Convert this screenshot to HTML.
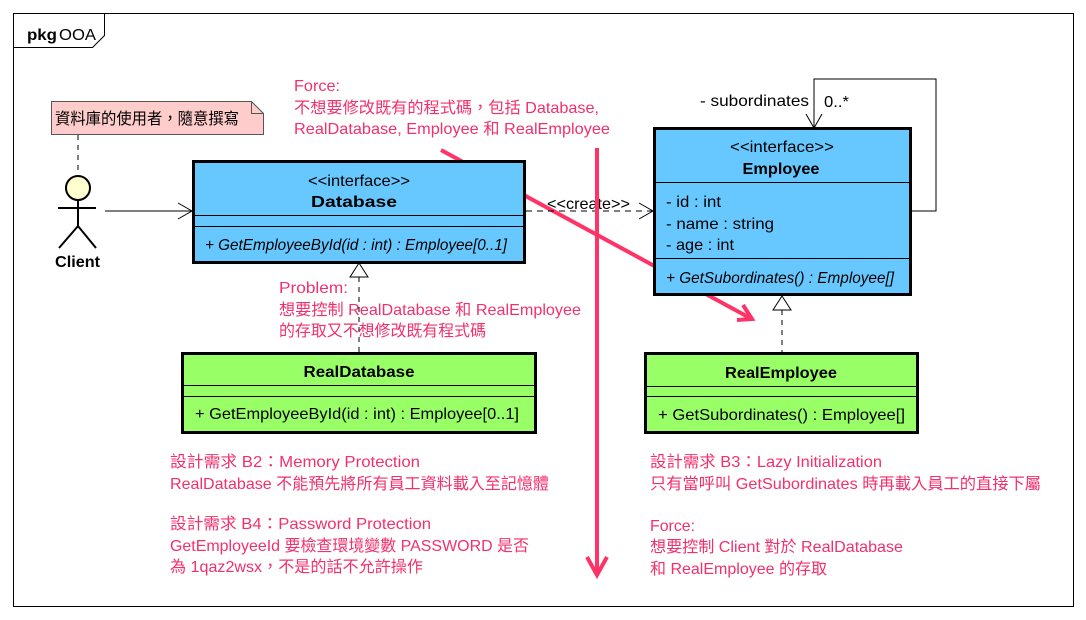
<!DOCTYPE html>
<html><head><meta charset="utf-8"><style>
html,body{margin:0;padding:0;background:#fff;width:1086px;height:620px;overflow:hidden}
svg text{font-family:"Liberation Sans","Noto Sans CJK TC",sans-serif;font-size:16px}
.p{fill:#f2306c}
.b{font-weight:bold}
.i{font-style:italic}
</style></head><body>
<svg width="1086" height="620" viewBox="0 0 1086 620" xmlns="http://www.w3.org/2000/svg">
<rect x="13.5" y="13.5" width="1060" height="593" fill="#fff" stroke="#000" stroke-width="1"/>
<path d="M13.5 47.5 H92.5 L104.5 35.5 V13.5" fill="none" stroke="#000"/>
<text x="27" y="40" class="b" textLength="30" lengthAdjust="spacingAndGlyphs">pkg</text>
<text x="59" y="40" textLength="37" lengthAdjust="spacingAndGlyphs">OOA</text>

<path d="M51.5 101.5 H251.5 L263.5 113.5 V134.5 H51.5 Z" fill="#ffcccc" stroke="#555"/>
<path d="M251.5 101.5 V113.5 H263.5" fill="none" stroke="#555"/>
<text x="55" y="124" textLength="184" lengthAdjust="spacingAndGlyphs">資料庫的使用者，隨意撰寫</text>
<line x1="78" y1="135" x2="78" y2="170" stroke="#000" stroke-dasharray="5,5"/>

<circle cx="78" cy="188" r="12" fill="#fefece" stroke="#000" stroke-width="2"/>
<path d="M78 200 V228 M58 208 H96 M59 248 L78 226 L96 248" fill="none" stroke="#000" stroke-width="2"/>
<text x="55" y="267" class="b" textLength="45" lengthAdjust="spacingAndGlyphs">Client</text>
<path d="M105 211 H192 M178 203 L192 211 L178 219" fill="none" stroke="#000"/>

<path d="M441 150 L750 318" stroke="#ff3366" stroke-width="4" fill="none"/>
<path d="M737 320 L752 319 L743 305" stroke="#ff3366" stroke-width="4" fill="none"/>

<rect x="193.5" y="161.5" width="331" height="101" fill="#66c8ff" stroke="#000" stroke-width="3"/>
<line x1="193" y1="215.5" x2="525" y2="215.5" stroke="#000"/>
<line x1="193" y1="226.5" x2="525" y2="226.5" stroke="#000"/>
<text x="359" y="186" text-anchor="middle" textLength="102" lengthAdjust="spacingAndGlyphs">&lt;&lt;interface&gt;&gt;</text>
<text x="354" y="207" text-anchor="middle" class="b" textLength="86" lengthAdjust="spacingAndGlyphs">Database</text>
<text x="205" y="250" class="i" textLength="302" lengthAdjust="spacingAndGlyphs">+ GetEmployeeById(id : int) : Employee[0..1]</text>

<path d="M526 211 H652" stroke="#000" stroke-dasharray="6,5" fill="none"/>
<path d="M639 203 L653 211 L639 219" stroke="#000" fill="none"/>
<text x="547" y="209" textLength="83" lengthAdjust="spacingAndGlyphs">&lt;&lt;create&gt;&gt;</text>

<path d="M911 211 H936 V79 H814 V127 M806 114 L814 128 L822 114" fill="none" stroke="#000"/>
<text x="700" y="106" textLength="109" lengthAdjust="spacingAndGlyphs">- subordinates</text>
<text x="824" y="107" textLength="25" lengthAdjust="spacingAndGlyphs">0..*</text>
<rect x="654.5" y="128.5" width="256" height="166" fill="#66c8ff" stroke="#000" stroke-width="3"/>
<line x1="654" y1="182.5" x2="911" y2="182.5" stroke="#000"/>
<line x1="654" y1="258.5" x2="911" y2="258.5" stroke="#000"/>
<text x="782" y="152" text-anchor="middle" textLength="104" lengthAdjust="spacingAndGlyphs">&lt;&lt;interface&gt;&gt;</text>
<text x="781" y="174" text-anchor="middle" class="b" textLength="77" lengthAdjust="spacingAndGlyphs">Employee</text>
<text x="666" y="207" textLength="55" lengthAdjust="spacingAndGlyphs">- id : int</text>
<text x="666" y="229" textLength="108" lengthAdjust="spacingAndGlyphs">- name : string</text>
<text x="666" y="250" textLength="68" lengthAdjust="spacingAndGlyphs">- age : int</text>
<text x="666" y="283" class="i" textLength="228" lengthAdjust="spacingAndGlyphs">+ GetSubordinates() : Employee[]</text>

<path d="M359 277 V353" stroke="#000" stroke-dasharray="5,5" fill="none"/>
<path d="M359 263 L350 277 H368 Z" fill="#fff" stroke="#000"/>
<path d="M782 310 V353" stroke="#000" stroke-dasharray="5,5" fill="none"/>
<path d="M782 296 L773 310 H791 Z" fill="#fff" stroke="#000"/>

<rect x="182.5" y="353.5" width="353" height="79" fill="#99ff66" stroke="#000" stroke-width="3"/>
<line x1="182" y1="385.5" x2="536" y2="385.5" stroke="#000"/>
<line x1="182" y1="396.5" x2="536" y2="396.5" stroke="#000"/>
<text x="359" y="377" text-anchor="middle" class="b" textLength="111" lengthAdjust="spacingAndGlyphs">RealDatabase</text>
<text x="195" y="419" textLength="324" lengthAdjust="spacingAndGlyphs">+ GetEmployeeById(id : int) : Employee[0..1]</text>

<rect x="645.5" y="353.5" width="272" height="79" fill="#99ff66" stroke="#000" stroke-width="3"/>
<line x1="645" y1="386.5" x2="918" y2="386.5" stroke="#000"/>
<line x1="645" y1="396.5" x2="918" y2="396.5" stroke="#000"/>
<text x="781" y="378" text-anchor="middle" class="b" textLength="112" lengthAdjust="spacingAndGlyphs">RealEmployee</text>
<text x="658" y="420" textLength="247" lengthAdjust="spacingAndGlyphs">+ GetSubordinates() : Employee[]</text>

<path d="M597 148 V575 M587 557 L597 575 L607 557" stroke="#ff3366" stroke-width="4" fill="none"/>

<text class="p" x="294" y="91" textLength="46" lengthAdjust="spacingAndGlyphs">Force:</text>
<text class="p" x="294" y="113" textLength="305" lengthAdjust="spacingAndGlyphs">不想要修改既有的程式碼，包括 Database,</text>
<text class="p" x="294" y="134" textLength="316" lengthAdjust="spacingAndGlyphs">RealDatabase, Employee 和 RealEmployee</text>

<text class="p" x="279" y="293" textLength="69" lengthAdjust="spacingAndGlyphs">Problem:</text>
<text class="p" x="279" y="315" textLength="302" lengthAdjust="spacingAndGlyphs">想要控制 RealDatabase 和 RealEmployee</text>
<text class="p" x="279" y="336" textLength="207" lengthAdjust="spacingAndGlyphs">的存取又不想修改既有程式碼</text>

<text class="p" x="170" y="467" textLength="250" lengthAdjust="spacingAndGlyphs">設計需求 B2：Memory Protection</text>
<text class="p" x="170" y="489" textLength="379" lengthAdjust="spacingAndGlyphs">RealDatabase 不能預先將所有員工資料載入至記憶體</text>
<text class="p" x="170" y="529" textLength="261" lengthAdjust="spacingAndGlyphs">設計需求 B4：Password Protection</text>
<text class="p" x="170" y="551" textLength="359" lengthAdjust="spacingAndGlyphs">GetEmployeeId 要檢查環境變數 PASSWORD 是否</text>
<text class="p" x="170" y="572" textLength="253" lengthAdjust="spacingAndGlyphs">為 1qaz2wsx，不是的話不允許操作</text>

<text class="p" x="650" y="467" textLength="232" lengthAdjust="spacingAndGlyphs">設計需求 B3：Lazy Initialization</text>
<text class="p" x="650" y="489" textLength="391" lengthAdjust="spacingAndGlyphs">只有當呼叫 GetSubordinates 時再載入員工的直接下屬</text>
<text class="p" x="650" y="531" textLength="45" lengthAdjust="spacingAndGlyphs">Force:</text>
<text class="p" x="650" y="552" textLength="253" lengthAdjust="spacingAndGlyphs">想要控制 Client 對於 RealDatabase</text>
<text class="p" x="650" y="574" textLength="177" lengthAdjust="spacingAndGlyphs">和 RealEmployee 的存取</text>
</svg>
</body></html>
